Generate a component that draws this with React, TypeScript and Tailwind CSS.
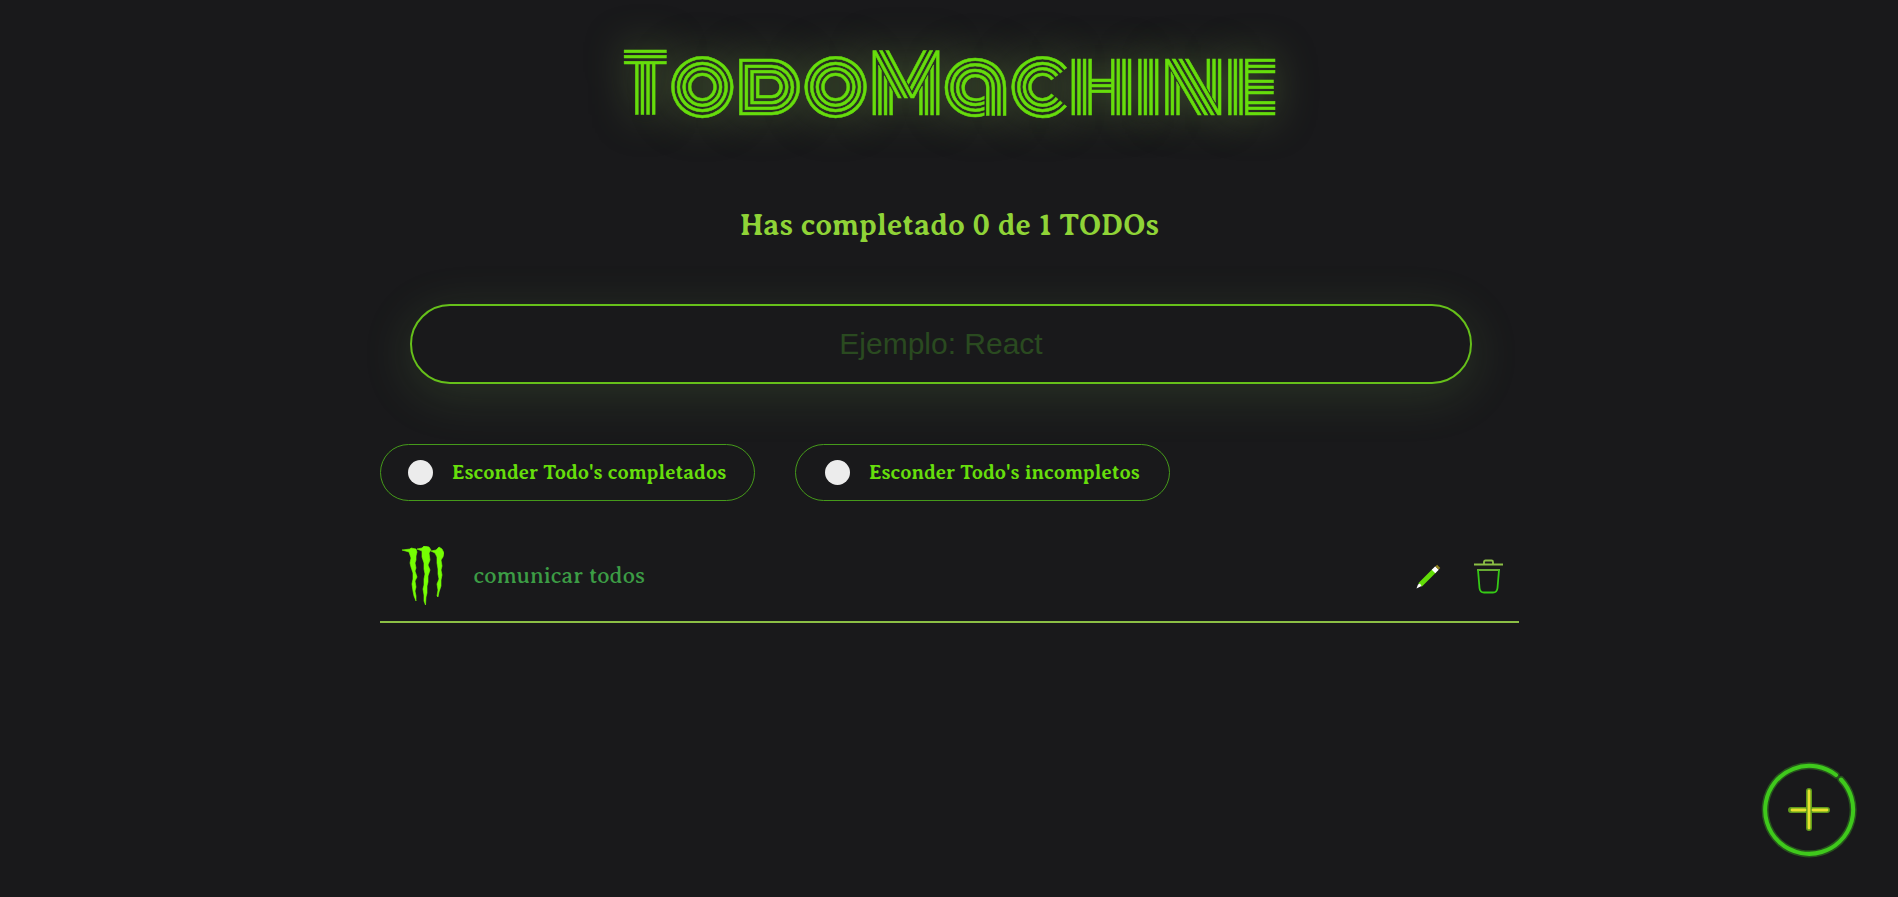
import React from "react";

function Claws() {
  return (
    <svg width="42" height="60" viewBox="0 0 42 60" fill="#76ff03" stroke="#76ff03" strokeWidth="0.6">
      <path d="M0 4 8 3 9 2 14 3 15 6 14 10 14 14 13 17 14 22 13 25 15 31 13 35 14 41 13 45 14 50 14 55 12 50 11 45 10 38 11 33 11 27 9 21 8 17 9 12 7 6Z" />
      <path d="M15 3 20 2 22 0 27 1 29 4 27 7 28 14 26 19 28 24 26 30 26 36 25 40 25 47 24 51 23.500 59 22 55 22 49 21 43 22 39 22 33 23 28 22 23 22 17 20 11 20 5Z" />
      <path d="M29 5 34 4 37 1 40 3 42 7 41 11 39 14 40 20 39 24 40 29 39 34 39 40 37 46 36 51 35 50 36 44 35 38 37 33 36 28 36 23 35 17 35 11 33 7Z" />
    </svg>
  );
}

function Pencil() {
  return (
    <svg width="25" height="25" viewBox="0 0 25 25">
      <path d="M4 21 18.500 6.500" stroke="#62dc08" strokeWidth="5" />
      <path d="M0.500 24.500 2 20.500 4 19.500 5.500 22Z" fill="#fff" />
      <path d="m17.500 7.500 3.500-3.500" stroke="#fff" strokeWidth="5" />
      <path d="m21 4 1.700-1.700" stroke="#92841c" strokeWidth="4.500" />
    </svg>
  );
}

function Trash() {
  return (
    <svg width="31" height="35" viewBox="0 0 31 35" fill="none" strokeWidth="1.800">
      <path d="M1 5.500H30M11 5V3Q11 1.500 12.500 1.500H18.500Q20 1.500 20 3V5" stroke="#8bbf45" />
      <path d="M4 11H27" stroke="#72bd38" />
      <path d="M5 11 6.500 29Q6.900 33.500 11 33.500H20Q24.100 33.500 24.500 29L26 11" stroke="#35c916" />
    </svg>
  );
}

function Filter({ label, pad }: { label: string; pad: string }) {
  return (
    <label className={`flex h-[57px] w-[375px] items-center rounded-full border border-[#459a1a] ${pad}`}>
      <span className="size-[25px] shrink-0 rounded-full bg-[#ececec]" />
      <span className="ml-[19px] whitespace-nowrap text-xl font-bold text-[#66dd0c]">{label}</span>
    </label>
  );
}

export default function App() {
  return (
    <div className="relative h-[897px] overflow-hidden bg-[#19191b] font-['Averia_Serif_Libre','Liberation_Serif',serif]">
      <h1 className="flex h-[190px] items-start justify-center whitespace-nowrap pl-[2px] pt-5 font-['Monoton','Inter',sans-serif] text-[80px] font-normal leading-[130px] text-[#66dd0c] [-webkit-text-stroke:0.5px_#66dd0c] [text-shadow:0_0_40px_rgba(143,191,89,0.55)]">
        TodoMachine
      </h1>
      <h2 className="flex h-[70px] items-center justify-center whitespace-nowrap pl-px pt-px text-[30px] font-bold text-[#8fd337]">
        Has completado 0 de 1 TODOs
      </h2>
      <main className="ml-[380px] w-[1139px]">
        <div className="pl-[30px] pt-11">
          <input
            placeholder="Ejemplo: React"
            className="block h-20 w-[1062px] rounded-full border-2 border-[#66c01a] bg-[#19191b] text-center font-['Liberation_Sans',sans-serif] text-[30px] shadow-[0_10px_50px_rgba(110,160,80,0.2)] outline-none placeholder:text-[#2a4a20] placeholder:opacity-100"
          />
        </div>
        <div className="mt-[60px] flex gap-10">
          <Filter label="Esconder Todo's completados" pad="pl-[27px]" />
          <Filter label="Esconder Todo's incompletos" pad="pl-[29px]" />
        </div>
        <div className="mt-[30px] flex h-[92px] items-center border-b-2 border-[#8bbf45] pl-[22px]">
          <Claws />
          <p className="ml-[29.500px] flex-1 text-[22.600px] text-[#3c9c45]">comunicar todos</p>
          <div className="mr-[15px] flex items-center gap-8">
            <Pencil />
            <Trash />
          </div>
        </div>
      </main>
      <button aria-label="+" className="absolute bottom-[37px] right-[39px] size-[100px]">
        <svg width="100" height="100" viewBox="0 0 100 100" fill="none" strokeLinecap="round">
          <path d="M77 15A44 44 0 1 0 82 19.500" stroke="#3cad20" strokeWidth="7" opacity="0.4" />
          <path d="M77 15A44 44 0 1 0 82 19.500" stroke="#3fc91c" strokeWidth="4" />
          <path d="M50 31V68M32 50H68" stroke="#5f9a1c" strokeWidth="6" />
          <path d="M50 31V68M33 50H46M54 50H68" stroke="#e6e22c" strokeWidth="2.800" />
        </svg>
      </button>
    </div>
  );
}
